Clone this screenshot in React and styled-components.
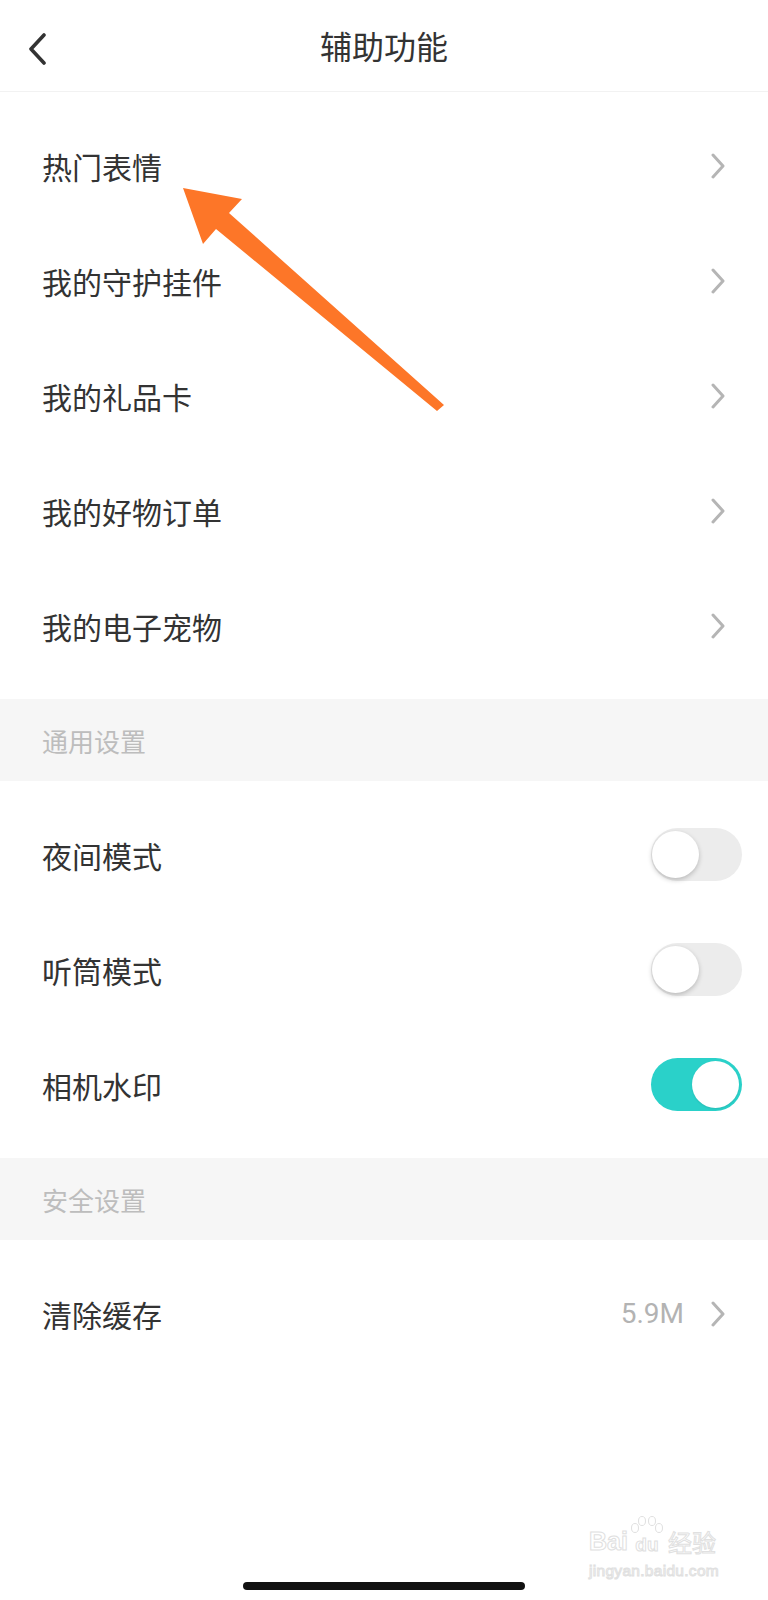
import React from 'react';
import styled, { createGlobalStyle } from 'styled-components';

const GlobalStyle = createGlobalStyle`
  body {
    margin: 0;
    background: #fff;
    font-family: "Noto Sans CJK SC", "Noto Sans", sans-serif;
    color: #333;
  }
`;

const Page = styled.div`
  position: relative;
  width: 768px;
  min-height: 1600px;
  display: flex;
  flex-direction: column;
  background: #fff;
  overflow: hidden;
`;

const Header = styled.header`
  height: 91px;
  display: flex;
  align-items: center;
  justify-content: center;
  position: relative;
  border-bottom: 1px solid #f2f2f2;
`;

const BackButton = styled.div`
  position: absolute;
  left: 27px;
  top: 33px;
  width: 20px;
  height: 32px;
`;

const Title = styled.h1`
  margin: 0;
  font-size: 32px;
  font-weight: 400;
  color: #333;
  line-height: 1;
  padding-bottom: 2px;
`;

const List = styled.div`
  padding: 16px 0;
`;

const Row = styled.div`
  height: ${({ h }) => h || 115}px;
  display: flex;
  align-items: center;
  padding: 0 ${({ pr }) => pr || 42}px 0 42px;
`;

const Label = styled.span`
  flex: 1;
  font-size: 30px;
  color: #333;
  line-height: 1;
`;

const Value = styled.span`
  font-family: Roboto, "Liberation Sans", sans-serif;
  font-size: 28px;
  color: #b3b3b3;
  margin-right: 26px;
`;

const SectionHead = styled.div`
  height: 82px;
  background: #f6f6f6;
  display: flex;
  align-items: center;
  padding-left: 42px;
  font-size: 26px;
  color: #bdbdbd;
`;

const Track = styled.div`
  width: 91px;
  height: 53px;
  border-radius: 27px;
  background: ${({ on }) => (on ? '#2ad1c9' : '#ececec')};
  display: flex;
  align-items: center;
  justify-content: ${({ on }) => (on ? 'flex-end' : 'flex-start')};
  padding: 0 3px;
  box-sizing: border-box;
`;

const Knob = styled.div`
  width: 47px;
  height: 47px;
  border-radius: 50%;
  background: #fff;
  box-shadow: ${({ on }) =>
    on ? '0 1px 2px rgba(0,0,0,0.1)' : '0 2px 5px rgba(0,0,0,0.22)'};
  margin-left: ${({ on }) => (on ? 0 : -2)}px;
`;

const Spacer = styled.div`
  flex: 1;
`;

const HomeBar = styled.div`
  width: 282px;
  height: 8px;
  border-radius: 4px;
  background: #111;
  margin: 0 auto 10px;
`;

const Arrow = styled.svg`
  position: absolute;
  left: 0;
  top: 0;
  pointer-events: none;
`;

const Watermark = styled.div`
  position: absolute;
  left: 589px;
  top: 1516px;
  display: flex;
  flex-direction: column;
  align-items: flex-start;
  color: transparent;
  -webkit-text-stroke: 1px #e0e0e0;
  font-family: "Liberation Sans", sans-serif;
  pointer-events: none;
`;

const MarkTop = styled.div`
  display: flex;
  align-items: flex-end;
  font-size: 25px;
  font-weight: 700;
  line-height: 1;
`;

const Paw = styled.div`
  position: relative;
  display: flex;
  flex-direction: column;
  align-items: center;
  margin: 0 4px 0 2px;
  font-size: 19px;
`;

const PawToes = styled.svg`
  display: block;
  margin-bottom: 1px;
`;

const MarkCn = styled.span`
  font-family: "Noto Sans CJK SC", sans-serif;
  font-size: 24px;
  font-weight: 400;
`;

const MarkBottom = styled.div`
  font-size: 15.5px;
  margin-top: 9px;
  letter-spacing: 0.3px;
  line-height: 1;
`;

const Chevron = () => (
  <svg width="16" height="26" viewBox="0 0 16 26">
    <path
      d="M3 2 L13 13 L3 24"
      fill="none"
      stroke="#b5b5b5"
      strokeWidth="3"
      strokeLinecap="round"
      strokeLinejoin="round"
    />
  </svg>
);

const Switch = ({ on }) => (
  <Track on={on ? 1 : 0}>
    <Knob on={on ? 1 : 0} />
  </Track>
);

const menu = ['热门表情', '我的守护挂件', '我的礼品卡', '我的好物订单', '我的电子宠物'];
const toggles = [
  { label: '夜间模式', on: false },
  { label: '听筒模式', on: false },
  { label: '相机水印', on: true },
];

const App = () => {
  return (
    <Page>
      <GlobalStyle />
      <Header>
        <BackButton>
          <svg width="20" height="32" viewBox="0 0 20 32">
            <path
              d="M17 2 L4 16 L17 30"
              fill="none"
              stroke="#333"
              strokeWidth="3.6"
              strokeLinecap="round"
              strokeLinejoin="round"
            />
          </svg>
        </BackButton>
        <Title>辅助功能</Title>
      </Header>

      <List>
        {menu.map((item) => (
          <Row key={item}>
            <Label>{item}</Label>
            <Chevron />
          </Row>
        ))}
      </List>

      <SectionHead>通用设置</SectionHead>
      <List>
        {toggles.map((t) => (
          <Row key={t.label} h={115} pr={26}>
            <Label>{t.label}</Label>
            <Switch on={t.on} />
          </Row>
        ))}
      </List>

      <SectionHead>安全设置</SectionHead>
      <List>
        <Row>
          <Label>清除缓存</Label>
          <Value>5.9M</Value>
          <Chevron />
        </Row>
      </List>

      <Spacer />
      <HomeBar />

      <Arrow width="768" height="1600" viewBox="0 0 768 1600">
        <polygon
          points="183,188 242,199 229,213 444,405 437,411 216,229 203,244"
          fill="#fd7628"
        />
      </Arrow>

      <Watermark>
        <MarkTop>
          <span>Bai</span>
          <Paw>
            <PawToes width="34" height="18" viewBox="0 0 34 18">
              <g fill="none" stroke="#e0e0e0" strokeWidth="1">
                <ellipse cx="5" cy="12" rx="3.5" ry="4.5" />
                <ellipse cx="12" cy="5" rx="3.5" ry="4.5" />
                <ellipse cx="22" cy="5" rx="3.5" ry="4.5" />
                <ellipse cx="29" cy="12" rx="3.5" ry="4.5" />
              </g>
            </PawToes>
            <span>du</span>
          </Paw>
          <MarkCn>经验</MarkCn>
        </MarkTop>
        <MarkBottom>jingyan.baidu.com</MarkBottom>
      </Watermark>
    </Page>
  );
};

export default App;
